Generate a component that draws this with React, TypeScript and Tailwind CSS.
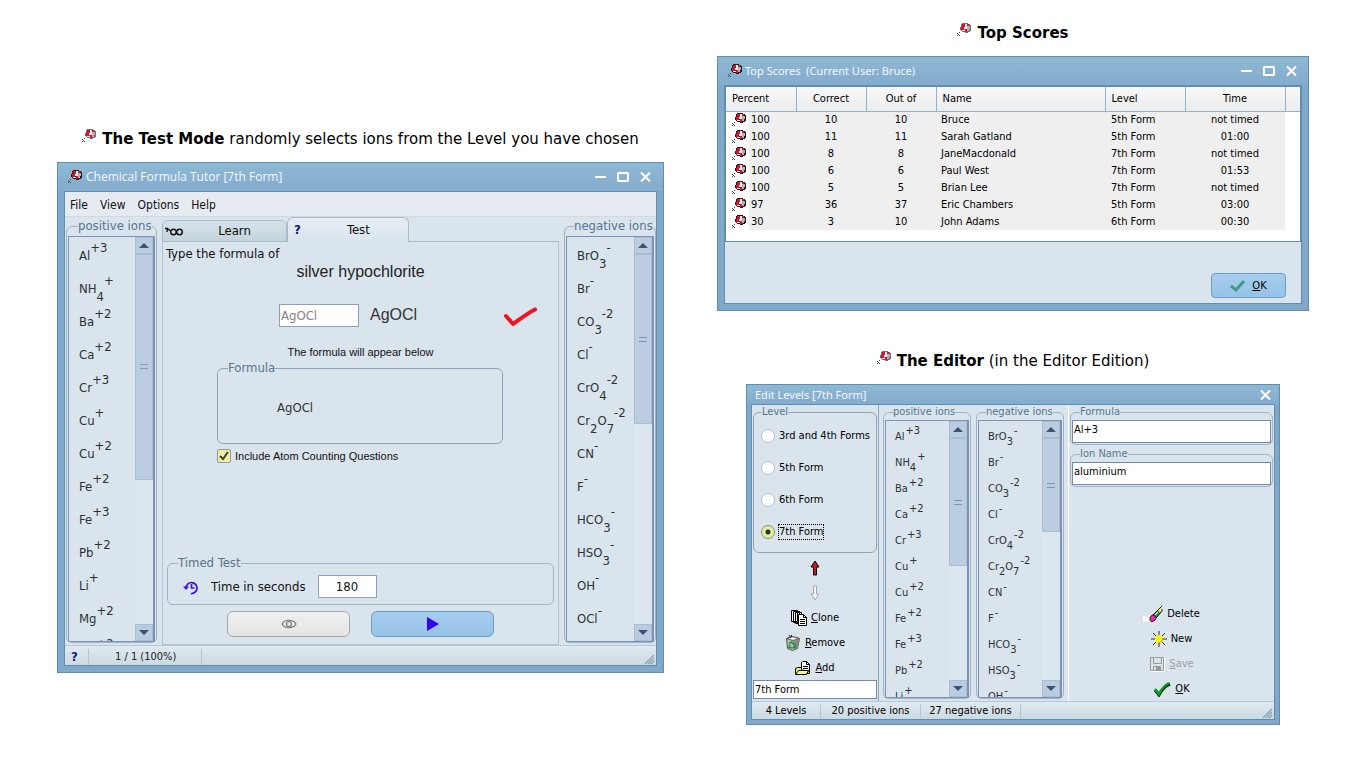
import { useState, type ReactNode } from "react";
import clsx from "clsx";

const POSITIVE = ["Al^+3", "NH_4^+", "Ba^+2", "Ca^+2", "Cr^+3", "Cu^+", "Cu^+2", "Fe^+2", "Fe^+3", "Pb^+2", "Li^+", "Mg^+2", "Mn^+2"];
const NEGATIVE = ["BrO_3^-", "Br^-", "CO_3^-2", "Cl^-", "CrO_4^-2", "Cr_2O_7^-2", "CN^-", "F^-", "HCO_3^-", "HSO_3^-", "OH^-", "OCl^-", "NO_3^-"];

const SCORES = [
  ["100", "10", "10", "Bruce", "5th Form", "not timed"],
  ["100", "11", "11", "Sarah Gatland", "5th Form", "01:00"],
  ["100", "8", "8", "JaneMacdonald", "7th Form", "not timed"],
  ["100", "6", "6", "Paul West", "7th Form", "01:53"],
  ["100", "5", "5", "Brian Lee", "7th Form", "not timed"],
  ["97", "36", "37", "Eric Chambers", "5th Form", "03:00"],
  ["30", "3", "10", "John Adams", "6th Form", "00:30"],
];

const LEVELS = ["3rd and 4th Forms", "5th Form", "6th Form", "7th Form"];

function Logo({ className }: { className?: string }) {
  return (
    <svg viewBox="0 0 14 14" className={clsx("size-3.5 shrink-0", className)} shapeRendering="crispEdges">
      <path d="M5 0h6v1h2v1h1v6h-1v1h-2v1H8V9H5V8H4V7H3V4h1V1h1z" fill="currentColor" />
      <path d="M5 1h3v3H5z M4 4h3v3H4z M10 1h2v2h-2z M8 6h2v3H8z" fill="#d0152c" />
      <path d="M8 1h2v3H8z M7 4h3v2H7z M5 7h3v1H5z" fill="#f2eeee" />
      <path d="M10 3h3v3h-3z M10 6h2v2h-2z" fill="#b4b1b3" />
      <path d="M2 9h1v1H2z M0 10h1v1H0z M1 11h1v1H1z M0 12h1v1H0z M2 12h1v1H2z" fill="#35595f" />
    </svg>
  );
}

function Heading({ title, children }: { title: string; children?: ReactNode }) {
  return (
    <h2 className="flex justify-center gap-1.5 font-['DejaVu_Sans',sans-serif] text-[15px] leading-5 text-black">
      <Logo className="text-[#7c6a6e]" />
      <span>
        <b>{title}</b> {children}
      </span>
    </h2>
  );
}

function WindowButtons({ closeOnly }: { closeOnly?: boolean }) {
  const icon = "size-3 fill-none stroke-white stroke-2";
  return (
    <div className="ml-auto flex items-center gap-2.5">
      {!closeOnly && (
        <>
          <button aria-label="Minimize">
            <svg viewBox="0 0 12 12" className={icon}><path d="M0 6h11" /></svg>
          </button>
          <button aria-label="Maximize">
            <svg viewBox="0 0 12 12" className={icon}><rect x="1" y="2" width="10" height="8" rx="0.5" /></svg>
          </button>
        </>
      )}
      <button aria-label="Close">
        <svg viewBox="0 0 12 12" className={icon}><path d="M2 1.500l9 9M11 1.500l-9 9" /></svg>
      </button>
    </div>
  );
}

function Group({ label, className, legendClass, children }: { label: string; className?: string; legendClass?: string; children: ReactNode }) {
  return (
    <fieldset className={clsx("min-w-0 rounded-md border", className)}>
      <legend className={clsx("whitespace-nowrap text-[#56758f]", legendClass)}>{label}</legend>
      {children}
    </fieldset>
  );
}

function Scrollbar({ thumb }: { thumb: number }) {
  const button = "flex h-[17px] shrink-0 items-center justify-center border border-[#a9bdd3] bg-[#b9cce0]";
  return (
    <div className="flex w-[18px] shrink-0 flex-col bg-[#dce6ee]">
      <button aria-label="Scroll up" className={button}>
        <svg viewBox="0 0 10 5" className="h-[5px] w-2.5" fill="#3c5377"><path d="M5 0l5 5H0z" /></svg>
      </button>
      <div className="grow">
        <div className="flex flex-col items-center justify-center gap-[3px] border border-[#a9bdd3] bg-[#bccde1]" style={{ height: `${thumb}%` }}>
          <i className="h-px w-2 bg-[#7f95b4]" />
          <i className="h-px w-2 bg-[#7f95b4]" />
        </div>
      </div>
      <button aria-label="Scroll down" className={button}>
        <svg viewBox="0 0 10 5" className="h-[5px] w-2.5" fill="#3c5377"><path d="M5 5l5-5H0z" /></svg>
      </button>
    </div>
  );
}

// "^" raises the run that follows it, "_" lowers it by one digit
function Ion({ formula, small }: { formula: string; small?: boolean }) {
  const parts = formula.match(/\^.+|_\d|[^_^]+/g) ?? [];
  return (
    <li className={clsx("flex items-center whitespace-nowrap", small ? "h-[26px]" : "h-[33px]")}>
      {parts.map((part, i) => (
        <span key={i} className={clsx(part[0] === "^" && (small ? "pb-3 pl-px" : "pb-4"), part[0] === "_" && (small ? "pt-2.5" : "pt-4"))}>
          {part.replace(/[\^_]/, "")}
        </span>
      ))}
    </li>
  );
}

function IonList({ ions, thumb, small }: { ions: string[]; thumb: number; small?: boolean }) {
  return (
    <div className={clsx("flex overflow-hidden border border-r-2 border-[#7f93b6] text-[#2c3233]", small ? "h-[278px]" : "h-[406px]")}>
      <ul className={clsx("grow overflow-hidden", small ? "pt-[3px] pl-[9px] text-[11px] leading-[14px]" : "pt-[2px] pl-2.5 text-[13px] leading-4")}>
        {ions.map((ion) => (
          <Ion key={ion} formula={ion} small={small} />
        ))}
      </ul>
      <Scrollbar thumb={thumb} />
    </div>
  );
}

function Grip() {
  return (
    <svg viewBox="0 0 12 12" className="mr-px ml-auto size-3 self-end" stroke="#93a5b2" strokeWidth="1.5">
      <path d="M2 11l9-9M5 11l6-6M8 11l3-3" />
    </svg>
  );
}

const frame = "border border-[#5e8fb3] bg-[#7fa8c9]";
const titlebar = "flex items-center bg-linear-to-b from-[#8fb8d3] to-[#83acce] text-[#f2f8fc]";
const statusbar = "flex items-center border-t border-[#b4c8d6] bg-linear-to-b from-[#e0eaf0] to-[#cbdae1] text-[11px]";

function TestWindow() {
  const [answer, setAnswer] = useState("AgOCl");
  const [seconds, setSeconds] = useState("180");
  const [counting, setCounting] = useState(true);

  return (
    <section className={clsx(frame, "px-1.5 pb-1.5 text-[13px] leading-4")}>
      <header className={clsx(titlebar, "-mx-1.5 h-7 gap-1 pr-3 pl-2.5 font-['Open_Sans',sans-serif] text-xs")}>
        <Logo className="text-[#241a1d]" />
        Chemical Formula Tutor [7th Form]
        <WindowButtons />
      </header>

      <div className="border border-[#5e8fb3] bg-[#dae4ed]">
        <nav className="flex h-[25px] items-center gap-3 border-b border-[#d0d9e3] bg-[#e6ebf2] px-[5px] pt-0.5 text-xs text-[#111]">
          {["File", "View", "Options", "Help"].map((item) => (
            <button key={item}>{item}</button>
          ))}
        </nav>

        <div className="flex h-[428px] gap-[5px]">
          <Group label="positive ions" className="mt-px ml-px w-[91px] self-start border-[#9fb3c9] px-px pt-0.5" legendClass="ml-2.5 leading-4">
            <IonList ions={POSITIVE} thumb={61} />
          </Group>

          <div className="flex min-w-0 grow flex-col text-[#111]">
            <div role="tablist" className="flex h-[25px] items-end">
              <button role="tab" aria-selected="false" className="flex h-[22px] w-[125px] items-center rounded-t-md border border-b-[#a9bbca] border-[#a9bbca] bg-linear-to-b from-[#d8e3ea] to-[#c3d3dc] pl-0.5">
                <svg viewBox="0 0 18 9" className="h-[9px] w-[18px]" fill="none" stroke="#111" strokeWidth="1.400">
                  <circle cx="8.500" cy="5" r="2.800" /><circle cx="14.500" cy="5" r="2.800" /><path d="M5.500 4L2.500 1.500 2 5M0 1.500L2.500 1.500" />
                </svg>
                <span className="grow text-center">Learn</span>
              </button>
              <button role="tab" aria-selected="true" className="flex h-[25px] w-[122px] items-center rounded-t-md border border-b-0 border-[#a9bbca] bg-linear-to-b from-[#e6eef3] to-[#dae4ed] pl-1.5">
                <b className="text-[#12127c]">?</b>
                <span className="grow pl-2 text-center">Test</span>
              </button>
              <div className="h-px grow bg-[#a9bbca]" />
            </div>

            <div className="flex grow flex-col border border-t-0 border-[#b3c2d3] px-1 pt-1">
              <p className="-mx-px">Type the formula of</p>
              <p className="text-center font-['Liberation_Sans',sans-serif] text-base leading-5 text-[#222]">silver hypochlorite</p>
              <div className="mt-[21px] flex items-center pl-28 text-[#333]">
                <input aria-label="Formula answer" value={answer} onChange={(e) => setAnswer(e.target.value)} className="h-[23px] w-20 border border-[#8ea0bd] bg-white px-px text-[13px] text-[#808080] outline-none" />
                <span className="ml-[11px] font-['Liberation_Sans',sans-serif] text-base">AgOCl</span>
                <svg viewBox="0 0 34 20" className="mt-1 mr-4 ml-auto h-5 w-[34px]" fill="none" stroke="#ef1222" strokeWidth="4" strokeLinecap="round" strokeLinejoin="round">
                  <path d="M2 9l7 8C16 12 24 6 31 2.500" />
                </svg>
              </div>
              <p className="mt-[17px] text-center font-['Liberation_Sans',sans-serif] text-[11px] leading-4">The formula will appear below</p>
              <Group label="Formula" className="mr-[51px] ml-[50px] h-[84px] border-[#8fa3bb]" legendClass="ml-2.5 leading-4">
                <p className="pt-6 pl-[59px] text-[13px] text-[#333]">AgOCl</p>
              </Group>
              <label className="mt-1 ml-[50px] flex items-center gap-1 font-['Liberation_Sans',sans-serif] text-[11px]">
                <span className="grid">
                  <input type="checkbox" checked={counting} onChange={() => setCounting(!counting)} className="peer col-start-1 row-start-1 size-3.5 appearance-none rounded-xs border border-[#8c9a92] bg-[#eef0a8]" />
                  <svg viewBox="0 0 14 14" className="pointer-events-none invisible col-start-1 row-start-1 size-3.5 peer-checked:visible" fill="none" stroke="#39442f" strokeWidth="2">
                    <path d="M3 7l3 3 5-7" />
                  </svg>
                </span>
                Include Atom Counting Questions
              </label>

              <Group label="Timed Test" className="mt-auto h-[50px] border-[#9fb3c9]" legendClass="ml-2.5 leading-4">
                <div className="flex items-center pt-1 pl-[15px]">
                  <svg viewBox="0 0 16 16" className="size-4" fill="none" stroke="#3a12e0" strokeWidth="1.700">
                    <path d="M3 9a5.500 5.500 0 1 1 5 5.500M8.500 5v4h3" /><path d="M0 7.500h6L3 11z" fill="#3a12e0" stroke="none" />
                  </svg>
                  <label htmlFor="seconds" className="ml-3">Time in seconds</label>
                  <input id="seconds" value={seconds} onChange={(e) => setSeconds(e.target.value)} className="ml-3 h-[23px] w-[59px] border border-[#8ea0bd] bg-white text-center text-[13px] outline-none" />
                </div>
              </Group>
              <div className="flex justify-center gap-[21px] pt-1.5 pb-[7px]">
                <button aria-label="Reveal" className="flex h-[26px] w-[123px] items-center justify-center rounded-md border border-[#a8a8a8] bg-linear-to-b from-[#f0f0f0] to-[#e4e4e4]">
                  <svg viewBox="0 0 16 10" className="h-2.5 w-4" fill="none" stroke="#777" strokeWidth="1.200"><path d="M1 5C4 0 12 0 15 5 12 10 4 10 1 5z" /><circle cx="8" cy="5" r="2.500" /></svg>
                </button>
                <button aria-label="Next question" className="flex h-[26px] w-[123px] items-center justify-center rounded-md border border-[#6d9cc5] bg-linear-to-b from-[#a5cdee] to-[#97c3e8]">
                  <svg viewBox="0 0 12 14" className="h-3.5 w-3" fill="#3400f5"><path d="M0 0l12 7-12 7z" /></svg>
                </button>
              </div>
            </div>
          </div>

          <Group label="negative ions" className="mt-px w-[92px] self-start border-[#9fb3c9] px-px pt-0.5" legendClass="ml-2 leading-4">
            <IonList ions={NEGATIVE} thumb={46} />
          </Group>
        </div>

        <footer className={clsx(statusbar, "h-5 pt-0.5 pl-1.5 text-[#222]")}>
          <b className="w-[18px] border-r border-[#b4c4d0] text-[13px] text-[#12127c]">?</b>
          <span className="w-[113px] border-r border-[#b4c4d0] pl-[26px]">1 / 1 (100%)</span>
          <Grip />
        </footer>
      </div>
    </section>
  );
}

function ScoresWindow() {
  const head = "border-r border-b border-[#8fb3d3] px-1.5 pt-px font-normal";
  return (
    <section className={clsx(frame, "px-1.5 pb-1.5 text-[11px] leading-[14px] text-black")}>
      <header className={clsx(titlebar, "-mx-1.5 h-7 gap-[3px] pr-[11px] pl-2.5 font-['Noto_Sans',sans-serif]")}>
        <Logo className="text-[#241a1d]" />
        <span className="whitespace-pre">Top Scores  (Current User: Bruce)</span>
        <WindowButtons />
      </header>
      <div className="border border-[#5e8fb3] bg-[#dae4ed]">
        <div className="border border-[#5e8fb3] bg-white pb-[11px]">
          <table className="w-full table-fixed border-collapse">
            <colgroup>
              <col className="w-[70px]" />
              <col className="w-[70px]" />
              <col className="w-[70px]" />
              <col />
              <col className="w-20" />
              <col className="w-[100px]" />
              <col className="w-[15px]" />
            </colgroup>
            <thead>
              <tr className="h-6 bg-linear-to-b from-[#f8f8f8] to-[#ececec]">
                <th className={clsx(head, "text-left")}>Percent</th>
                <th className={head}>Correct</th>
                <th className={head}>Out of</th>
                <th className={clsx(head, "text-left")}>Name</th>
                <th className={clsx(head, "text-left")}>Level</th>
                <th className={head}>Time</th>
                <th className="border-b border-[#8fb3d3]" />
              </tr>
            </thead>
            <tbody>
              {SCORES.map(([percent, correct, total, name, level, time]) => (
                <tr key={name} className="h-[17px] bg-[#efefef] *:pt-px">
                  <td className="bg-linear-to-r from-white from-[23px] to-[#efefef] to-[23px] pl-1.5">
                    <span className="flex items-center gap-[5px]"><Logo className="text-[#241a1d]" />{percent}</span>
                  </td>
                  <td className="text-center">{correct}</td>
                  <td className="text-center">{total}</td>
                  <td className="px-[5px]">{name}</td>
                  <td className="px-1.5">{level}</td>
                  <td className="text-center">{time}</td>
                  <td className="bg-white" />
                </tr>
              ))}
            </tbody>
          </table>
        </div>
        <div className="flex justify-end pt-[31px] pr-[15px] pb-[5px]">
          <button className="flex h-[25px] w-[75px] items-center justify-center gap-1.5 rounded border border-[#6d9cc5] bg-linear-to-b from-[#a5cdee] to-[#97c3e8]">
            <svg viewBox="0 0 16 12" className="h-3 w-4" fill="none" stroke="#3f9e82" strokeWidth="3"><path d="M1 6l5 4 8-9" /></svg>
            <span><u>O</u>K</span>
          </button>
        </div>
      </div>
    </section>
  );
}

function ToolButton({ icon, label, underlined, disabled }: { icon: ReactNode; label: string; underlined?: boolean; disabled?: boolean }) {
  return (
    <button disabled={disabled} className="flex h-[25px] items-center gap-1 disabled:text-[#9a9fa3]">
      {icon}
      <span>{underlined ? <><u>{label[0]}</u>{label.slice(1)}</> : label}</span>
    </button>
  );
}

const CloneIcon = (
  <svg viewBox="0 0 16 16" className="size-4" fill="#fff" stroke="#000">
    <path d="M.5 .5h6v11h-6zM2.500 1.500h6v11h-6zM4.500 2.500h6v11h-6z" />
    <path d="M7.500 4.500h5l3 3v8h-8zM12.500 4.500v3h3M9 9.500h5M9 11.500h5M9 13.500h5" />
  </svg>
);

const RemoveIcon = (
  <svg viewBox="0 0 16 16" className="size-4">
    <path d="M1.500 3.500l5-2 8 2-2 10-5 2-5-2z" fill="#b9bdb9" stroke="#555" />
    <path d="M2 3.500l6 2 6-2-7-2z" fill="#f4f4f4" stroke="#333" strokeWidth=".8" />
    <path d="M8 5.500v9.500l4.500-1.500 2-10z" fill="#858b85" />
    <path d="M4 9l2-2 3 2M9.500 9l1 3-3 1M7 13l-3-1 1-2" fill="none" stroke="#159443" strokeWidth="1.600" />
    <path d="M4 0l2 3M6.500 0v2" stroke="#222" />
  </svg>
);

const AddIcon = (
  <svg viewBox="0 0 16 14" className="h-3.5 w-4" stroke="#000">
    <path d="M.5 12.500v-5l2-1h5l1 1h6v5z" fill="#e9e77a" />
    <path d="M6.500 9V1.500l1-1h4l3 3V10z" fill="#fff" />
    <path d="M11.500 .5v3h3M8 5.500h5M8 7.500h5" fill="none" />
    <path d="M.5 13.500l3-4h10l-2 4z" fill="#f7f5a0" />
  </svg>
);

const DeleteIcon = (
  <svg viewBox="0 0 20 18" className="h-[18px] w-5">
    <path d="M0 10l3 2 3-2h3v7H6l-3-1-3 2z" fill="#fff" />
    <path d="M9 11l7-7 3 2-6 7z" fill="#2f9a46" stroke="#000" />
    <path d="M15 5l4-4v5l-2 2z" fill="#ecec8a" />
    <path d="M14 6l5-5M19 4v2l-3 3" fill="none" stroke="#222" />
    <path d="M11 11l4-4" stroke="#fff" />
    <path d="M8.500 10.500c2-1.500 5 1 4.500 3-1 2-3 3.500-5 3-1.500-1-1.500-4 .5-6z" fill="#ea2aa8" stroke="#000" strokeWidth=".9" />
  </svg>
);

const NewIcon = (
  <svg viewBox="0 0 16 16" className="size-4">
    <path d="M8 0v4M8 12v4M0 8h4M12 8h4M2 2l3 3M11 11l3 3M2 14l3-3M11 5l3-3" stroke="#33330f" />
    <circle cx="8" cy="8" r="4" fill="#fbf312" />
    <path d="M11.500 7a4 4 0 0 1-4 4.500" fill="none" stroke="#b3a80c" />
  </svg>
);

const SaveIcon = (
  <svg viewBox="0 0 16 16" className="size-4" fill="none" stroke="#999">
    <path d="M1.500 1.500h13v13h-13zM4.500 1.500v6h8v-6M4.500 14.500v-4h7v4" />
    <path d="M7 11h4v4H7z" fill="#999" stroke="none" />
    <path d="M15.500 1v14.500H1" stroke="#fff" />
  </svg>
);

const OkIcon = (
  <svg viewBox="0 0 18 16" className="h-4 w-[18px]" fill="none" strokeWidth="3">
    <path d="M2 9l4 5c3-6 6-9 11-11" stroke="#05350d" />
    <path d="M2 8l4 5c3-6 6-9 10-11" stroke="#0b9a2b" strokeWidth="2.500" />
  </svg>
);

function EditorWindow() {
  const [level, setLevel] = useState("7th Form");
  const [levelName, setLevelName] = useState("7th Form");
  const [formula, setFormula] = useState("Al+3");
  const [ionName, setIonName] = useState("aluminium");
  const field = "block w-full border border-[#7489ab] bg-white px-px text-[11px] outline-none";
  const arrow = "flex h-[25px] items-center";

  return (
    <section className={clsx(frame, "mx-[29px] px-1 pb-1 text-[11px] leading-[14px] text-black")}>
      <header className={clsx(titlebar, "-mx-1 h-[19px] pr-2 pl-2 font-['Noto_Sans',sans-serif]")}>
        Edit Levels [7th Form]
        <WindowButtons closeOnly />
      </header>
      <div className="border border-[#5e8fb3] bg-[#dae4ed]">
        <div className="flex h-[296px] gap-1">
          <div className="flex w-[127px] shrink-0 flex-col items-center border-r border-[#8fa8c0] px-px">
            <Group label="Level" className="w-full border-[#8fa3bb] pt-px" legendClass="ml-2">
              <div className="pb-1">
                {LEVELS.map((name) => (
                  <label key={name} className="flex h-8 items-center gap-[3px] pl-[7px]">
                    <input type="radio" name="level" checked={level === name} onChange={() => setLevel(name)} className="size-3.5 appearance-none rounded-full border border-[#b3c3d1] bg-white checked:border-[#7f8f6c] checked:bg-[radial-gradient(circle,#26332a_0_2px,#e3ee9c_3px)]" />
                    <span className={clsx("border border-dotted", level === name ? "border-black" : "border-transparent")}>{name}</span>
                  </label>
                ))}
              </div>
            </Group>
            <button aria-label="Move up" className={clsx(arrow, "mt-0.5")}>
              <svg viewBox="0 0 10 16" className="h-4 w-2.5" fill="#e0101c" stroke="#000"><path d="M5 1l4 6H6.500v8h-3V7H1z" /></svg>
            </button>
            <button aria-label="Move down" disabled className={arrow}>
              <svg viewBox="0 0 10 16" className="h-4 w-2.5" fill="#f1f4f6" stroke="#a4a9ad"><path d="M5 15l4-6H6.500V1h-3v8H1z" /></svg>
            </button>
            <ToolButton icon={CloneIcon} label="Clone" underlined />
            <ToolButton icon={RemoveIcon} label="Remove" underlined />
            <ToolButton icon={AddIcon} label="Add" underlined />
            <input aria-label="Level name" value={levelName} onChange={(e) => setLevelName(e.target.value)} className={clsx(field, "h-[19px]")} />
          </div>

          <Group label="positive ions" className="mr-px w-[88px] shrink-0 self-start border-[#9fb3c9] px-px pt-px" legendClass="ml-2">
            <IonList ions={POSITIVE} thumb={53} small />
          </Group>
          <Group label="negative ions" className="w-[88px] shrink-0 self-start border-[#9fb3c9] px-px pt-px" legendClass="ml-2">
            <IonList ions={NEGATIVE} thumb={39} small />
          </Group>

          <div className="flex grow flex-col items-center border-l border-white px-px">
            <Group label="Formula" className="w-full border-[#9fb3c9] p-px" legendClass="ml-2">
              <input aria-label="Formula" value={formula} onChange={(e) => setFormula(e.target.value)} className={clsx(field, "h-[23px] pb-1")} />
            </Group>
            <Group label="Ion Name" className="mt-0.5 w-full border-[#9fb3c9] p-px" legendClass="ml-2">
              <input aria-label="Ion Name" value={ionName} onChange={(e) => setIonName(e.target.value)} className={clsx(field, "h-[23px] pb-1")} />
            </Group>
            <div className="mt-auto flex flex-col items-center">
              <ToolButton icon={DeleteIcon} label="Delete" />
              <ToolButton icon={NewIcon} label="New" />
              <ToolButton icon={SaveIcon} label="Save" underlined disabled />
              <ToolButton icon={OkIcon} label="OK" underlined />
            </div>
          </div>
        </div>
        <footer className={clsx(statusbar, "h-[18px]")}>
          <span className="w-[69px] border-r border-[#b4c4d0] text-center">4 Levels</span>
          <span className="w-[100px] border-r border-[#b4c4d0] text-center">20 positive ions</span>
          <span className="w-[100px] border-r border-[#b4c4d0] text-center">27 negative ions</span>
          <Grip />
        </footer>
      </div>
    </section>
  );
}

export default function App() {
  return (
    <main className="grid min-h-screen grid-cols-[607fr_592fr] gap-x-[53px] bg-white px-[57px] font-['DejaVu_Sans_Condensed','Noto_Sans',sans-serif]">
      <div className="pt-[129px]">
        <Heading title="The Test Mode">randomly selects ions from the Level you have chosen</Heading>
        <div className="pt-[13px]">
          <TestWindow />
        </div>
      </div>
      <div className="pt-[23px]">
        <Heading title="Top Scores" />
        <div className="pt-[13px] pb-10">
          <ScoresWindow />
        </div>
        <Heading title="The Editor">(in the Editor Edition)</Heading>
        <div className="pt-[13px]">
          <EditorWindow />
        </div>
      </div>
    </main>
  );
}
